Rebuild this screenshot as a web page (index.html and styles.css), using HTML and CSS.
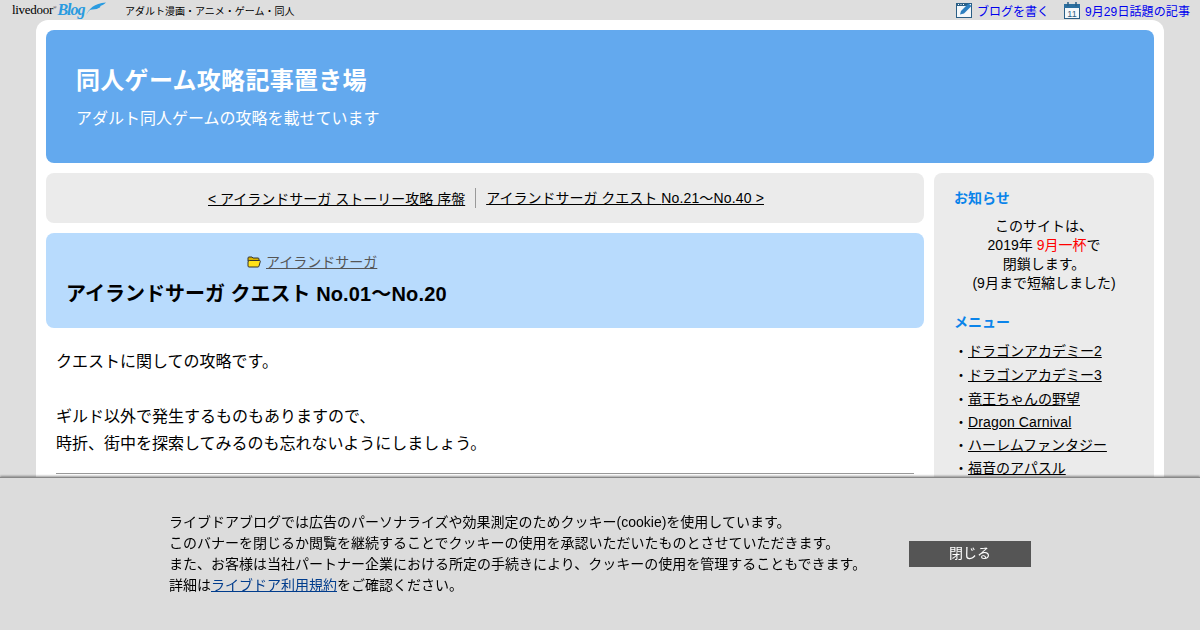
FILE: index.html
```html
<!DOCTYPE html>
<html lang="ja">
<head>
  <meta charset="UTF-8">
  <title>同人ゲーム攻略記事置き場</title>
  <link rel="stylesheet" href="styles.css">
</head>
<body>
  <div class="topbar">
    <div class="topbar-left">
      <a class="logo" href="#">
        <span class="logo-ld">livedoor<sup>&reg;</sup></span>
        <span class="logo-blog">Blog</span>
        <svg class="logo-wing" width="20" height="15" viewBox="0 0 22 15">
          <path d="M0 15 C3 8 9 2 22 1 C20 3 18 4 15 5 C17 5 16 6 14 7 C11 9 8 8 5 9 C3 10 2 12 0 15Z" fill="#2a9be0"/>
        </svg>
      </a>
      <span class="topbar-cat">アダルト漫画・アニメ・ゲーム・同人</span>
    </div>
    <div class="topbar-right">
      <a href="#">
        <svg width="16" height="16" viewBox="0 0 16 16">
          <rect x="0.5" y="1.5" width="15" height="14" fill="#f4f8fb" stroke="#2b5f86"/>
          <rect x="0" y="1" width="12" height="3" fill="#2b5f86"/>
          <path d="M2 2.5H3M4.5 2.5H5.5M7 2.5H8" stroke="#fff"/>
          <path d="M4 12.5L5 9L12.5 1.5L15.5 4L8 11.5Z" fill="#2d7fc0"/>
        </svg>
        ブログを書く
      </a>
      <a href="#">
        <svg width="16" height="17" viewBox="0 0 16 17">
          <rect x="0.5" y="2.5" width="15" height="14" fill="#f4f8fb" stroke="#2b5f86"/>
          <rect x="0" y="2" width="16" height="4" fill="#2b6f9f"/>
          <path d="M4 0V4M12 0V4" stroke="#2b5f86" stroke-width="1.5"/>
          <text class="cal-day" x="8" y="15" text-anchor="middle">11</text>
        </svg>
        <span>9月29日話題の記事</span>
      </a>
    </div>
  </div>

  <div class="wrapper">
    <header class="site-header">
      <h1>同人ゲーム攻略記事置き場</h1>
      <p>アダルト同人ゲームの攻略を載せています</p>
    </header>

    <div class="columns">
      <main class="main">
        <nav class="pager">
          <a class="pager-prev" href="#">&lt; アイランドサーガ ストーリー攻略 序盤</a>
          <a class="pager-next" href="#">アイランドサーガ クエスト <span class="latin">No.21～No.40 &gt;</span></a>
        </nav>
        <div class="article-head">
          <div class="article-cat">
            <svg width="14" height="12" viewBox="0 0 14 12">
              <path d="M1 2Q1 1 2 1H5L6 2H11Q12 2 12 3V5H1Z" fill="#d8b400" stroke="#333"/>
              <path d="M2.5 4.5H12.5Q13.5 4.5 13.3 5.5L12 10Q11.8 11 11 11H2Q1 11 1 10V6Q1 4.5 2.5 4.5Z" fill="#ffe21a" stroke="#333"/>
            </svg>
            <a href="#">アイランドサーガ</a>
          </div>
          <h2>アイランドサーガ クエスト <span class="latin">No.01～No.20</span></h2>
        </div>
        <div class="article-body">
          <p>クエストに関しての攻略です。</p>
          <p>ギルド以外で発生するものもありますので、<br>時折、街中を探索してみるのも忘れないようにしましょう。</p>
          <hr>
        </div>
      </main>

      <aside class="side">
        <h3>お知らせ</h3>
        <p class="notice">このサイトは、<br>2019年 <span class="red">9月一杯</span>で<br>閉鎖します。<br>(9月まで短縮しました)</p>
        <h3>メニュー</h3>
        <ul class="menu">
          <li><a href="#">ドラゴンアカデミー2</a></li>
          <li><a href="#">ドラゴンアカデミー3</a></li>
          <li><a href="#">竜王ちゃんの野望</a></li>
          <li class="row-tight"><a class="latin" href="#">Dragon Carnival</a></li>
          <li class="row-tight"><a href="#">ハーレムファンタジー</a></li>
          <li class="row-tight"><a href="#">福音のアパスル</a></li>
        </ul>
      </aside>
    </div>
  </div>

  <div class="cookie">
    <p>ライブドアブログでは広告のパーソナライズや効果測定のためクッキー(cookie)を使用しています。<br>このバナーを閉じるか閲覧を継続することでクッキーの使用を承認いただいたものとさせていただきます。<br>また、お客様は当社パートナー企業における所定の手続きにより、クッキーの使用を管理することもできます。<br>詳細は<a href="#">ライブドア利用規約</a>をご確認ください。</p>
    <button type="button">閉じる</button>
  </div>
</body>
</html>
```

FILE: styles.css
```css
html, body {
  height: 630px;
  overflow: hidden;
}
body {
  margin: 0;
  padding: 0;
  background-color: #dedede;
  color: #000;
  font-family: "Liberation Sans", Arial, "Noto Sans CJK JP", sans-serif;
}
a {
  color: #000;
}
.latin {
  letter-spacing: 0.15px;
}
.topbar {
  display: flex;
  justify-content: space-between;
  height: 20px;
  padding: 0 10px 0 12px;
  font-size: 11px;
}
.topbar-left {
  display: flex;
  align-items: center;
}
.logo {
  display: flex;
  align-items: center;
  width: 113px;
  height: 18px;
  color: #000;
  text-decoration: none;
}
.logo-ld {
  font-family: "Liberation Serif", serif;
  font-size: 13px;
  letter-spacing: -0.3px;
}
.logo-ld sup {
  font-size: 5px;
}
.logo-blog {
  margin-left: 1px;
  color: #2a9be0;
  font-family: "Liberation Serif", serif;
  font-size: 16px;
  font-style: italic;
  font-weight: bold;
  letter-spacing: -1px;
}
.logo-wing {
  margin: -4px 0 0 1px;
}
.topbar-cat {
  font-size: 10px;
}
.topbar-right {
  display: flex;
  align-items: center;
  gap: 15px;
}
.topbar-right a {
  display: flex;
  align-items: center;
  gap: 5px;
  color: #0000ee;
  font-size: 12px;
  text-decoration: none;
}
.topbar-right a span {
  letter-spacing: 0.1px;
}
.cal-day {
  fill: #2b5f86;
  font-size: 9px;
}
.wrapper {
  width: 1108px;
  margin: 0 auto;
  padding: 10px;
  background-color: #fff;
  border-radius: 12px;
  height: 600px;
}
.site-header {
  box-sizing: border-box;
  height: 133px;
  padding: 36px 30px 0;
  background-color: #63a9ee;
  border-radius: 8px;
  color: #fff;
}
.site-header h1 {
  margin: 0;
  font-size: 24px;
  letter-spacing: 0.3px;
  line-height: 30px;
}
.site-header p {
  margin: 11px 0 0;
  font-size: 16px;
  line-height: 24px;
}
.columns {
  display: flex;
  gap: 10px;
  margin-top: 10px;
}
.main {
  flex: 1;
}
.pager {
  display: flex;
  justify-content: center;
  align-items: center;
  box-sizing: border-box;
  height: 50px;
  padding-left: 2px;
  background-color: #ebebeb;
  border-radius: 8px;
  font-size: 14px;
}
.pager-prev {
  padding-right: 10px;
}
.pager-next {
  padding-left: 10px;
  border-left: 1px solid #999;
  line-height: 20px;
}
.article-head {
  box-sizing: border-box;
  height: 95px;
  margin-top: 10px;
  padding: 19px 20px 0;
  background-color: #b8dbfd;
  border-radius: 8px;
}
.article-cat {
  display: flex;
  align-items: center;
  gap: 5px;
  margin-left: 181px;
  font-size: 14px;
  line-height: 20px;
}
.article-cat a {
  color: #555;
}
.article-head h2 {
  margin: 8px 0 0;
  font-size: 20px;
  line-height: 28px;
}
.article-body {
  padding: 20px 10px 0;
  font-size: 16px;
  line-height: 27px;
}
.article-body p {
  margin: 0 0 28px;
}
.article-body hr {
  margin: -12px 0 0;
  border: 0;
  border-top: 1px solid #999;
}
.side {
  box-sizing: border-box;
  width: 220px;
  height: 400px;
  padding: 16px 20px;
  background-color: #ebebeb;
  border-radius: 8px;
  font-size: 14px;
}
.side h3 {
  margin: 0;
  color: #0a84ea;
  font-size: 14px;
  line-height: 18px;
}
.notice {
  margin: 10px 0 20px;
  line-height: 19px;
  text-align: center;
}
.red {
  color: #f00;
}
.menu {
  margin: 8px 0 0;
  padding: 0;
  list-style: none;
}
.menu li {
  line-height: 24px;
}
.menu li::before {
  content: "・";
}
.menu .row-tight {
  margin-top: -1px;
}
.cookie {
  position: fixed;
  left: 0;
  right: 0;
  bottom: 0;
  box-sizing: border-box;
  height: 153px;
  display: flex;
  align-items: flex-start;
  padding: 34px 0 0 169px;
  background-color: #dcdcdc;
  border-top: 1px solid #888;
  box-shadow: 0 -1px 2px rgba(0, 0, 0, 0.4);
  font-size: 14px;
  line-height: 21px;
}
.cookie p {
  margin: 0;
  width: 740px;
}
.cookie a {
  color: #003c8c;
}
.cookie button {
  width: 122px;
  height: 26px;
  margin: 29px 0 0;
  padding: 0 0 5px;
  background-color: #555;
  color: #fff;
  border: 0;
  font-family: inherit;
  font-size: 14px;
}
```
